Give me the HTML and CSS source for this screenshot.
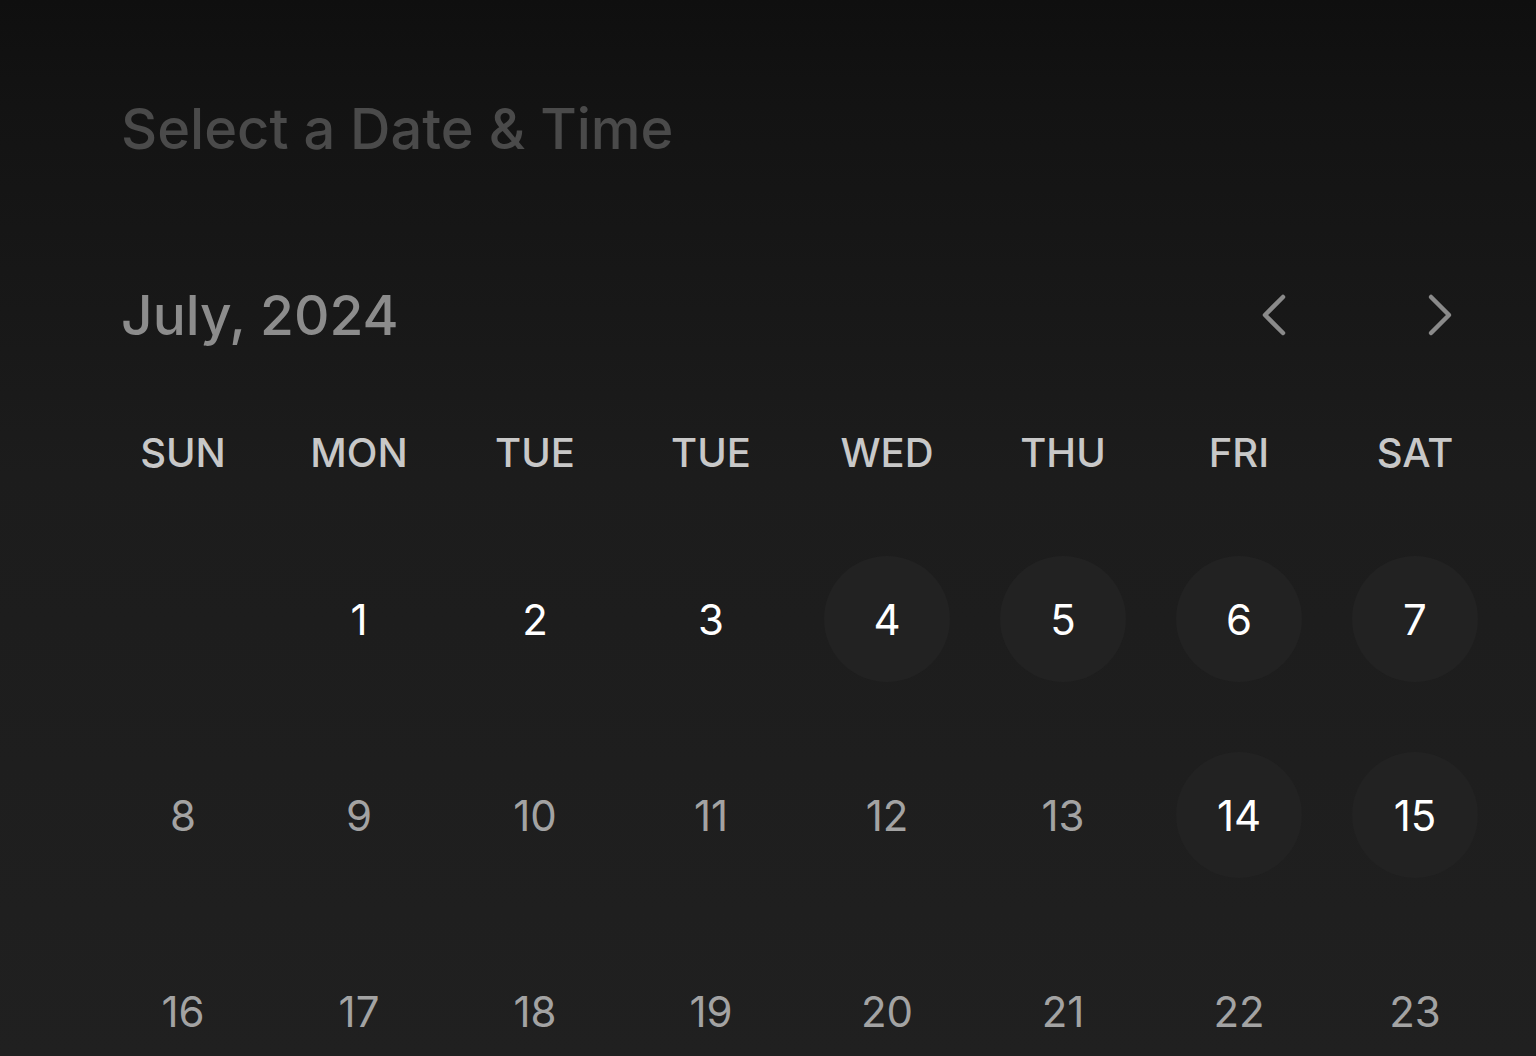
FILE: index.html
```html
<!DOCTYPE html>
<html lang="en">
<head>
  <meta charset="UTF-8">
  <title>Select a Date &amp; Time</title>
  <link rel="stylesheet" href="styles.css">
</head>
<body>
  <div class="page">
    <h1 class="title">Select a Date &amp; Time</h1>

    <div class="month-bar">
      <div class="month">July, 2024</div>
      <div class="arrows">
        <button class="arrow" aria-label="Previous month">
          <svg width="28" height="44" viewBox="0 0 28 44"><path d="M24 4 L6 22 L24 40" fill="none" stroke="#8a8a8a" stroke-width="4.5" stroke-linecap="round" stroke-linejoin="round"/></svg>
        </button>
        <button class="arrow" aria-label="Next month">
          <svg width="28" height="44" viewBox="0 0 28 44"><path d="M4 4 L22 22 L4 40" fill="none" stroke="#8a8a8a" stroke-width="4.5" stroke-linecap="round" stroke-linejoin="round"/></svg>
        </button>
      </div>
    </div>

    <div class="weekdays">
      <div>SUN</div><div>MON</div><div>TUE</div><div>TUE</div>
      <div>WED</div><div>THU</div><div>FRI</div><div>SAT</div>
    </div>

    <div class="days">
      <div class="day empty"></div>
      <div class="day open">1</div>
      <div class="day open">2</div>
      <div class="day open">3</div>
      <div class="day open avail">4</div>
      <div class="day open avail">5</div>
      <div class="day open avail">6</div>
      <div class="day open avail">7</div>

      <div class="day">8</div>
      <div class="day">9</div>
      <div class="day">10</div>
      <div class="day">11</div>
      <div class="day">12</div>
      <div class="day">13</div>
      <div class="day open avail">14</div>
      <div class="day open avail">15</div>

      <div class="day">16</div>
      <div class="day">17</div>
      <div class="day">18</div>
      <div class="day">19</div>
      <div class="day">20</div>
      <div class="day">21</div>
      <div class="day">22</div>
      <div class="day">23</div>
    </div>
  </div>
</body>
</html>
```

FILE: styles.css
```css
html, body { height: 100%; }
body {
  margin: 0;
  font-family: 'Inter', 'Noto Sans', sans-serif;
  background: linear-gradient(180deg, #0f0f0f 0%, #131313 10%, #1c1c1c 45%, #202020 100%);
  overflow: hidden;
}
.page {
  padding: 96px 33px 0 95px;
}
.title {
  margin: 0 0 0 26px;
  font-size: 56px;
  font-weight: 500;
  line-height: 1.2;
  color: #4a4a4a;
}
.month-bar {
  display: flex;
  justify-content: space-between;
  align-items: center;
  margin-top: 119px;
  padding-left: 26px;
}
.month {
  font-size: 55px;
  font-weight: 500;
  line-height: 1.2;
  color: #8c8c8c;
}
.arrows {
  display: flex;
  gap: 140px;
  margin-right: 48px;
}
.arrow {
  background: none;
  border: none;
  padding: 0;
  cursor: pointer;
  display: flex;
}
.weekdays {
  display: grid;
  grid-template-columns: repeat(8, 176px);
  margin-top: 81px;
  font-size: 40px;
  font-weight: 500;
  color: #c8c8c8;
  text-align: center;
  line-height: 1.2;
}
.days {
  display: grid;
  grid-template-columns: repeat(8, 176px);
  grid-auto-rows: 196px;
  margin-top: 44px;
}
.day {
  display: flex;
  align-items: center;
  justify-content: center;
  font-size: 42px;
  color: #a3a3a3;
}
.day.open { color: #fff; }
.day.avail { position: relative; z-index: 0; }
.day.avail::before {
  content: "";
  position: absolute;
  width: 126px;
  height: 126px;
  border-radius: 50%;
  background: #222222;
  z-index: -1;
}
```
